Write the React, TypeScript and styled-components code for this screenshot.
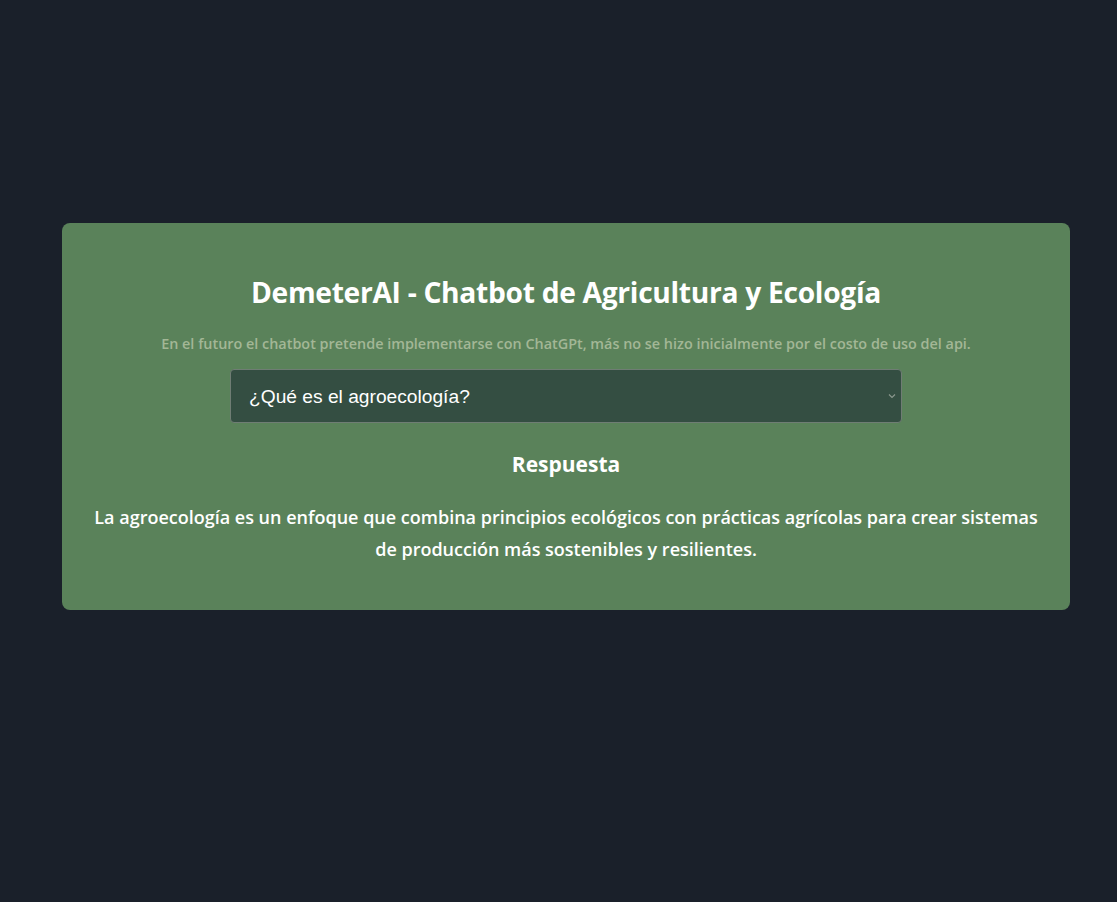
import React, { useState } from "react";
import styled, { createGlobalStyle } from "styled-components";

const GlobalStyle = createGlobalStyle`
  html, body {
    margin: 0;
    padding: 0;
    background: #1a202a;
  }
  body {
    font-family: "Open Sans", "Noto Sans", sans-serif;
    color: #ffffff;
  }
`;

const Page = styled.main`
  min-height: 902px;
  box-sizing: border-box;
  padding: 223px 47px 0 62px;
  display: flex;
  flex-direction: column;
  align-items: stretch;
`;

const Card = styled.section`
  background: #5a825a;
  border-radius: 8px;
  padding: 52px 24px 45px;
  display: flex;
  flex-direction: column;
  align-items: center;
  text-align: center;
`;

const Title = styled.h1`
  margin: 0;
  font-size: 28.2px;
  line-height: 34px;
  font-weight: 700;
  color: #ffffff;
  letter-spacing: -0.3px;
`;

const Note = styled.p`
  margin: 25px 0 0;
  font-size: 14.4px;
  line-height: 20px;
  font-weight: 600;
  color: #a3b796;
`;

const SelectWrap = styled.div`
  position: relative;
  width: 672px;
  margin-top: 15px;
`;

const Select = styled.select`
  appearance: none;
  -webkit-appearance: none;
  width: 100%;
  height: 54px;
  box-sizing: border-box;
  padding: 0 30px 0 18px;
  background: #344e42;
  border: 1px solid #6f7d74;
  border-radius: 4px;
  color: #ffffff;
  font-family: "Liberation Sans", Arial, sans-serif;
  font-size: 19.2px;
  outline: none;
`;

const Chevron = styled.svg`
  position: absolute;
  right: 6px;
  top: 50%;
  transform: translateY(-50%);
  width: 8px;
  height: 6px;
  pointer-events: none;
`;

const Heading = styled.h2`
  margin: 27px 0 0;
  font-size: 21px;
  line-height: 28px;
  font-weight: 700;
  color: #ffffff;
`;

const Answer = styled.p`
  margin: 23px 0 0;
  font-size: 18px;
  line-height: 32px;
  font-weight: 600;
  color: #ffffff;
`;

const questions = [
  "¿Qué es el agroecología?",
];

export default function App() {
  const [q, setQ] = useState(questions[0]);
  return (
    <>
      <GlobalStyle />
      <Page>
        <Card>
          <Title>DemeterAI - Chatbot de Agricultura y Ecología</Title>
          <Note>
            En el futuro el chatbot pretende implementarse con ChatGPt, más no se hizo inicialmente por el costo de uso del api.
          </Note>
          <SelectWrap>
            <Select value={q} onChange={(e) => setQ(e.target.value)}>
              {questions.map((x) => (
                <option key={x} value={x}>
                  {x}
                </option>
              ))}
            </Select>
            <Chevron viewBox="0 0 8 6">
              <path d="M1 1.5 L4 4.5 L7 1.5" fill="none" stroke="#8a978d" strokeWidth="1.2" />
            </Chevron>
          </SelectWrap>
          <Heading>Respuesta</Heading>
          <Answer>
            La agroecología es un enfoque que combina principios ecológicos con prácticas agrícolas para crear sistemas de producción más sostenibles y resilientes.
          </Answer>
        </Card>
      </Page>
    </>
  );
}
